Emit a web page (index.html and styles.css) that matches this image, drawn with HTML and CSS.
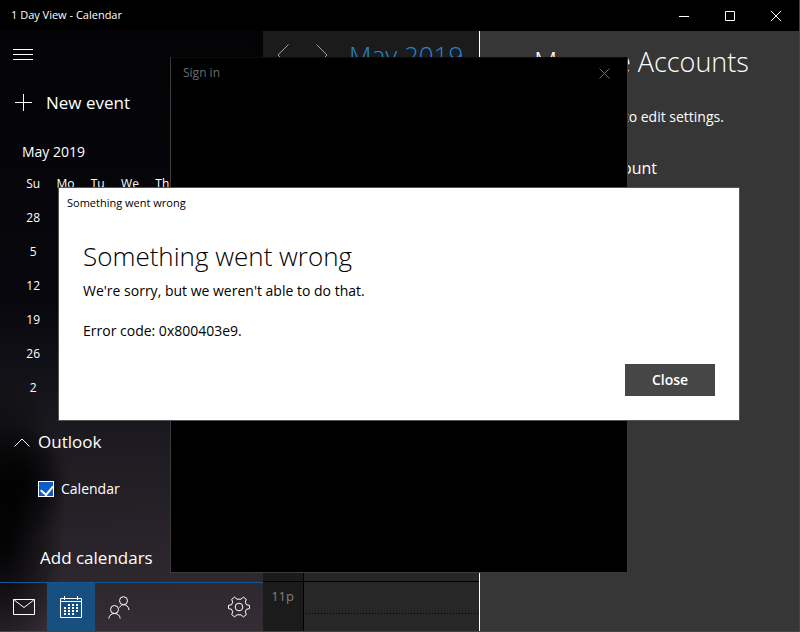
FILE: index.html
```html
<!DOCTYPE html>
<html lang="en">

<head>
  <meta charset="UTF-8">
  <meta name="viewport" content="width=device-width, initial-scale=1.0">
  <title>1 Day View - Calendar</title>
  <link rel="stylesheet" href="styles.css">
</head>

<body>
  <div class="window">
    <header class="title-bar">
      <span class="title">1 Day View - Calendar</span>
      <button type="button" class="caption-button" aria-label="Minimize">
        <svg width="10" height="10" viewBox="0 0 10 10"><path d="M0 5.5h10" /></svg>
      </button>
      <button type="button" class="caption-button" aria-label="Maximize">
        <svg width="10" height="10" viewBox="0 0 10 10"><path d="M.5.5h9v9h-9z" /></svg>
      </button>
      <button type="button" class="caption-button" aria-label="Close window">
        <svg width="10" height="10" viewBox="0 0 10 10"><path d="M0 0l10 10M10 0L0 10" /></svg>
      </button>
    </header>

    <div class="content">
      <aside class="sidebar">
        <button type="button" class="menu-button" aria-label="Menu">
          <svg width="20" height="12" viewBox="0 0 20 12"><path d="M0 .5h20M0 5.5h20M0 10.5h20" /></svg>
        </button>
        <button type="button" class="new-event">
          <svg width="18" height="18" viewBox="0 0 18 18"><path d="M0 8.5h17M8.5 0v17" /></svg>
          New event
        </button>

        <h2 class="month">May 2019</h2>
        <table class="mini-calendar">
          <thead>
            <tr><th>Su</th><th>Mo</th><th>Tu</th><th>We</th><th>Th</th><th></th><th></th></tr>
          </thead>
          <tbody>
            <tr><td>28</td></tr>
            <tr><td>5</td></tr>
            <tr><td>12</td></tr>
            <tr><td>19</td></tr>
            <tr><td>26</td></tr>
            <tr><td>2</td></tr>
          </tbody>
        </table>

        <button type="button" class="account">
          <svg width="16" height="9" viewBox="0 0 16 9"><path d="M.5 8.5L8 1l7.500 7.500" /></svg>
          Outlook
        </button>
        <label class="calendar-toggle" for="calendar-check">
          <input type="checkbox" id="calendar-check" checked>
          Calendar
        </label>
        <a class="add-calendars" href="#">Add calendars</a>

        <nav class="app-nav">
          <button type="button" aria-label="Mail">
            <svg width="22" height="16" viewBox="0 0 22 16"><path d="M.5.5h21v15H.5zM.5.5L11 8.500 21.500.5" /></svg>
          </button>
          <button type="button" class="active" aria-label="Calendar">
            <svg width="22" height="22" viewBox="0 0 22 22">
              <path d="M.5 2.500h21v19H.5zM.5 5.500h21M4.500 0v4M17.500 0v4" />
              <path class="dots" d="M8 9h10M4 12h14M4 15h14M4 18h10" />
            </svg>
          </button>
          <button type="button" aria-label="People">
            <svg width="22" height="23" viewBox="0 0 22 23">
              <circle cx="15.500" cy="4.700" r="4" />
              <circle cx="6.500" cy="13.500" r="4" />
              <path d="M11.500 11.500c1-1.800 2.400-2.800 4-2.800 3 0 5.200 2 5.500 5.300M.8 22.500c.4-3.200 2.600-5 5.700-5s5.300 1.800 5.700 5" />
            </svg>
          </button>
          <button type="button" class="settings" aria-label="Settings">
            <svg width="22" height="22" viewBox="0 0 22 22">
              <path d="M.5 9.300L3.500 8.800 4.700 6.200 3.700 3.400 6.600 1.100 9 3.200h4l2.400-2.100 2.900 2.300-1 2.800 1.200 2.600 3 .5v3.400l-3 .5-1.200 2.600 1 2.800-2.900 2.300-2.400-2.100H9l-2.400 2.100-2.900-2.300 1-2.800-1.200-2.600-3-.5z" />
              <circle cx="11" cy="11" r="3.800" />
            </svg>
          </button>
        </nav>
      </aside>

      <main class="day-view">
        <header class="day-header">
          <button type="button" aria-label="Previous day">
            <svg width="12" height="22" viewBox="0 0 12 22"><path d="M11.500.5L1 11l10.500 10.500" /></svg>
          </button>
          <button type="button" aria-label="Next day">
            <svg width="12" height="22" viewBox="0 0 12 22"><path d="M.5.5L11 11 .5 21.500" /></svg>
          </button>
          <h1>May 2019</h1>
        </header>
        <ol class="schedule">
          <li><span class="hour"></span><span class="slot"></span></li>
          <li><span class="hour">11p</span><span class="slot"></span></li>
        </ol>
      </main>

      <section class="accounts-pane">
        <h2>Manage Accounts</h2>
        <p>Select an account to edit settings.</p>
        <button type="button" class="add-account">
          <svg width="18" height="18" viewBox="0 0 18 18"><path d="M0 8.5h17M8.5 0v17" /></svg>
          Add account
        </button>
      </section>
    </div>
  </div>

  <div class="overlay">
    <div class="sign-in" role="dialog" aria-labelledby="sign-in-title">
      <span id="sign-in-title">Sign in</span>
      <button type="button" aria-label="Close sign in">
        <svg width="11" height="11" viewBox="0 0 11 11"><path d="M.5.5l10 10M10.500.5l-10 10" /></svg>
      </button>
    </div>
  </div>

  <div class="overlay overlay-error">
    <div class="error-dialog" role="alertdialog" aria-labelledby="error-title">
      <div class="error-caption">Something went wrong</div>
      <div class="error-body">
        <h2 id="error-title">Something went wrong</h2>
        <p>We're sorry, but we weren't able to do that.</p>
        <p>Error code: 0x800403e9.</p>
        <button type="button" class="close-button">Close</button>
      </div>
    </div>
  </div>
</body>

</html>
```

FILE: styles.css
```css
* {
  box-sizing: border-box;
}

body {
  margin: 0;
  font-family: "Segoe UI", "Open Sans", sans-serif;
  font-size: 14px;
  line-height: 20px;
  color: #ffffff;
  background-color: #454343;
}

h1,
h2,
p,
ol {
  margin: 0;
  padding: 0;
  font-weight: normal;
}

button {
  display: flex;
  align-items: center;
  padding: 0;
  border: none;
  background: none;
  color: inherit;
  font: inherit;
}

svg {
  flex: none;
  fill: none;
  stroke: currentColor;
}

.window {
  display: flex;
  flex-direction: column;
  min-height: 100vh;
  padding: 0 1px 1px 0;
}

/* Title bar */
.title-bar {
  display: flex;
  height: 31px;
  background-color: #000000;
}

.title {
  flex: 1;
  padding-left: 11px;
  font-size: 11px;
  line-height: 30px;
}

.caption-button {
  justify-content: center;
  width: 46px;
}

.content {
  flex: 1;
  display: grid;
  grid-template-columns: 263px 1fr 320px;
}

/* Sidebar */
.sidebar {
  display: flex;
  flex-direction: column;
  background:
    radial-gradient(ellipse 50px 60px at 20px 450px, rgba(0, 0, 0, 0.85), transparent),
    radial-gradient(ellipse 65px 150px at 0 490px, #040405 20%, transparent),
    linear-gradient(165deg, transparent 75%, rgba(70, 50, 56, 0.2)),
    linear-gradient(#040406, #07070d 45%, #1c1a20 67%, #2a252c 90%, #322c33);
}

.menu-button {
  height: 48px;
  padding-left: 13px;
}

.new-event {
  gap: 13px;
  height: 48px;
  padding-left: 15px;
  font-size: 17px;
}

.month {
  padding: 11px 0 2px 22px;
  font-size: 14px;
  line-height: 27px;
}

.mini-calendar {
  width: 226px;
  margin-left: 17px;
  border-collapse: collapse;
  table-layout: fixed;
  font-size: 12px;
  text-align: center;
}

.mini-calendar th,
.mini-calendar td {
  height: 34px;
  padding: 0;
  font-weight: normal;
}

.account {
  gap: 8px;
  height: 48px;
  margin-top: 13px;
  padding-left: 14px;
  font-size: 17px;
}

.calendar-toggle {
  display: flex;
  align-items: center;
  gap: 7px;
  height: 46px;
  padding-left: 38px;
}

.calendar-toggle input {
  appearance: none;
  width: 16px;
  height: 16px;
  margin: 0;
  border: 1px solid #ffffff;
}

.calendar-toggle input:checked {
  background-color: #0f5cc8;
}

.calendar-toggle input:checked::before {
  content: "";
  display: block;
  width: 6px;
  height: 10px;
  margin: 1px 0 0 4px;
  border: solid #ffffff;
  border-width: 0 2px 2px 0;
  transform: rotate(40deg);
}

.add-calendars {
  margin-top: auto;
  padding-left: 40px;
  color: #ffffff;
  font-size: 17px;
  line-height: 48px;
  text-decoration: none;
}

.app-nav {
  display: flex;
  height: 49px;
  border-top: 1px solid #17568f;
}

.app-nav button {
  justify-content: center;
  width: 48px;
}

.app-nav button:first-child {
  width: 47px;
}

.app-nav .active {
  background-color: #174f81;
}

.app-nav .dots {
  stroke-width: 2;
  stroke-dasharray: 2 2;
}

.app-nav .settings {
  margin-left: auto;
}

/* Day view */
.day-view {
  display: flex;
  flex-direction: column;
  overflow: hidden;
  background-color: #272727;
}

.day-header {
  display: flex;
  align-items: center;
  height: 48px;
  background-color: #1b1b1b;
  color: #2a84cf;
}

.day-header button {
  justify-content: center;
  width: 39px;
  color: #a0a0a0;
}

.day-header h1 {
  padding-left: 8px;
  font-size: 26px;
  font-weight: 300;
  white-space: nowrap;
}

.schedule {
  flex: 1;
  display: flex;
  flex-direction: column;
  justify-content: flex-end;
  list-style: none;
}

.schedule li {
  display: flex;
  height: 64px;
  border-top: 1px solid #000000;
}

.schedule li:last-child {
  height: 50px;
}

.hour {
  width: 41px;
  padding: 4px 9px 0 0;
  border-right: 1px solid #000000;
  background-color: #1b1b1b;
  color: #808080;
  font-size: 13px;
  text-align: right;
}

.slot {
  flex: 1;
  height: 32px;
  margin: 0 1px 0 2px;
  background: repeating-linear-gradient(90deg, #000000 0 1px, transparent 1px 3px) bottom / 100% 1px no-repeat;
}

/* Accounts pane */
.accounts-pane {
  display: flex;
  flex-direction: column;
  border-left: 1px solid #ffffff;
  padding: 13px 24px 0 26px;
  background-color: #363636;
}

.accounts-pane h2 {
  padding-left: 28px;
  font-size: 27px;
  font-weight: 300;
  line-height: 36px;
  white-space: nowrap;
}

.accounts-pane p {
  margin-top: 27px;
  white-space: nowrap;
}

.add-account {
  gap: 10px;
  height: 48px;
  margin-top: 17px;
  padding-left: 30px;
  font-size: 16px;
}

/* Dialogs */
.overlay {
  position: absolute;
  inset: 0 2px 2px 0;
  display: flex;
  align-items: center;
  justify-content: center;
}

.overlay-error {
  padding-bottom: 22px;
}

.sign-in {
  display: flex;
  align-items: flex-start;
  justify-content: space-between;
  width: 458px;
  height: 516px;
  padding: 5px 17px 0 12px;
  border: 1px solid #3c3c3c;
  border-top-color: #0c0c0c;
  background-color: #000000;
  color: #6c6c6c;
  font-size: 12px;
}

.sign-in button {
  height: 20px;
}

.error-dialog {
  width: 682px;
  border: 1px solid #555555;
  background-color: #ffffff;
  color: #000000;
}

.error-caption {
  padding-left: 8px;
  font-size: 11px;
  line-height: 30px;
}

.error-body {
  padding: 20px 24px 24px;
}

.error-body h2 {
  margin-bottom: 7px;
  font-size: 26px;
  font-weight: 300;
  line-height: 36px;
}

.error-body p + p {
  margin-top: 20px;
}

.close-button {
  justify-content: center;
  width: 90px;
  height: 32px;
  margin: 23px 0 0 auto;
  background-color: #464646;
  color: #ffffff;
  font-weight: 600;
}
```
